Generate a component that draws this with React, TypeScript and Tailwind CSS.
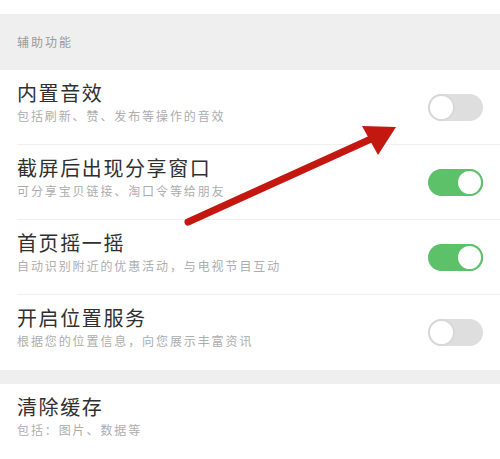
import React from 'react';

type Item = { title: string; desc: string; on?: boolean; toggle?: boolean };

const items: Item[] = [
  { title: '内置音效', desc: '包括刷新、赞、发布等操作的音效', on: false, toggle: true },
  { title: '截屏后出现分享窗口', desc: '可分享宝贝链接、淘口令等给朋友', on: true, toggle: true },
  { title: '首页摇一摇', desc: '自动识别附近的优惠活动，与电视节目互动', on: true, toggle: true },
  { title: '开启位置服务', desc: '根据您的位置信息，向您展示丰富资讯', on: false, toggle: true },
];

const font = { fontFamily: '"Noto Sans CJK SC", "Noto Sans", sans-serif' };

const Toggle: React.FC<{ on?: boolean }> = ({ on }) => (
  <div
    className={`w-[55px] h-[27px] rounded-full flex items-center shrink-0 ${
      on ? 'bg-[#5cc169] justify-end' : 'bg-[#dedede] justify-start'
    }`}
  >
    <div
      className={`w-[27px] h-[27px] rounded-full bg-white border-2 ${
        on ? 'border-[#5cc169]' : 'border-[#d8d8d8]'
      }`}
    />
  </div>
);

const Row: React.FC<{ item: Item; last?: boolean }> = ({ item, last }) => (
  <div className="h-[75px] pl-[17px] bg-white">
    <div className={`h-full flex items-center pr-[17px] ${last ? '' : 'border-b border-[#efefef]'}`}>
      <div className="flex-1 flex flex-col pb-[10px]">
        <span className="text-[20px] leading-[24px] tracking-[1.6px] text-[#303030]">{item.title}</span>
        <span className="text-[12px] leading-[16px] tracking-[1.9px] text-[#adadad] mt-[3px]">{item.desc}</span>
      </div>
      {item.toggle && <Toggle on={item.on} />}
    </div>
  </div>
);

export default function App() {
  return (
    <div className="relative w-[500px] h-[459px] bg-white overflow-hidden" style={font}>
      <div className="h-[14px] bg-white" />
      <div className="h-[56px] bg-[#efefef] pl-[17px] flex items-center">
        <span className="text-[12px] tracking-[2px] text-[#9a9a9a]">辅助功能</span>
      </div>
      {items.map((it, i) => (
        <Row key={it.title} item={it} last={i === items.length - 1} />
      ))}
      <div className="h-[14px] bg-[#efefef]" />
      <Row item={{ title: '清除缓存', desc: '包括：图片、数据等' }} last />

      {/* annotation arrow */}
      <svg className="absolute left-0 top-0 pointer-events-none" width="500" height="459">
        <line x1="188" y1="222" x2="382" y2="134" stroke="#c3170f" strokeWidth="7" strokeLinecap="round" />
        <polygon points="396,127 362,126 378,155" fill="#c3170f" />
      </svg>
    </div>
  );
}
